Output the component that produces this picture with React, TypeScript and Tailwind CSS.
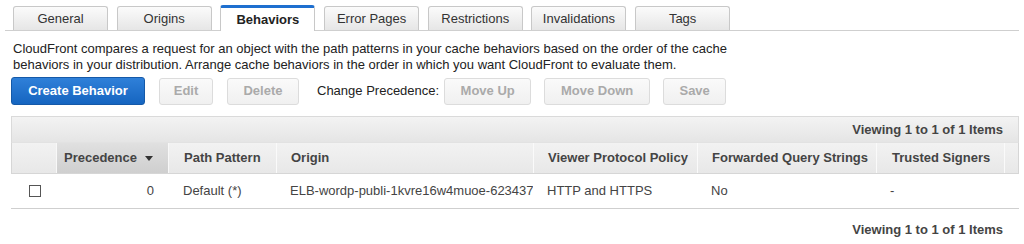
import React from "react";

const tabs = ["General", "Origins", "Behaviors", "Error Pages", "Restrictions", "Invalidations", "Tags"];

function Tab({ label, active }: { label: string; active?: boolean }) {
  if (active) {
    return (
      <div className="w-[95px] h-[26px] -mb-px flex items-center justify-center border border-[#c8c8c8] border-b-0 border-t-[3px] border-t-[#1e6fcf] rounded-t-[3px] bg-white text-[13px] font-bold text-[#222] pt-[1px]">
        {label}
      </div>
    );
  }
  return (
    <div className="w-[95px] h-[24px] flex items-center justify-center border border-[#c8c8c8] border-b-0 rounded-t-[3px] bg-gradient-to-b from-[#fbfbfb] to-[#e6e6e6] text-[13px] text-[#333]">
      {label}
    </div>
  );
}

function DisabledBtn({ label, w }: { label: string; w: string }) {
  return (
    <div className={`${w} h-[27px] flex items-center justify-center rounded-[3px] border border-[#dcdcdc] bg-gradient-to-b from-[#fafafa] to-[#f0f0f0] text-[13px] font-bold text-[#aaa]`}>
      {label}
    </div>
  );
}

export default function App() {
  return (
    <div
      className="w-[1024px] h-[244px] overflow-hidden bg-white text-[#333]"
      style={{ fontFamily: '"Liberation Sans", Arial, sans-serif' }}
    >
      {/* Tabs */}
      <div className="pt-[5px] pl-[5px] pr-[5px]">
        <div className="flex items-end gap-[8.7px] pl-[8px] h-[26px] border-b border-[#cfcfcf]">
          {tabs.map((t) => (
            <Tab key={t} label={t} active={t === "Behaviors"} />
          ))}
        </div>
      </div>

      {/* Description */}
      <div className="pl-[13px] pt-[10px] text-[13px] leading-[16px] text-[#222]">
        <div>CloudFront compares a request for an object with the path patterns in your cache behaviors based on the order of the cache</div>
        <div>behaviors in your distribution. Arrange cache behaviors in the order in which you want CloudFront to evaluate them.</div>
      </div>

      {/* Buttons */}
      <div className="flex items-center pl-[11px] pt-[4px]">
        <div className="w-[134px] h-[28px] flex items-center justify-center rounded-[3px] border border-[#1559a8] bg-gradient-to-b from-[#2f80d9] to-[#1565c0] text-[13px] font-bold text-white">
          Create Behavior
        </div>
        <div className="ml-[14px]"><DisabledBtn label="Edit" w="w-[54px]" /></div>
        <div className="ml-[14px]"><DisabledBtn label="Delete" w="w-[72px]" /></div>
        <div className="ml-[18px] text-[13px] text-[#222]">Change Precedence:</div>
        <div className="ml-[5px]"><DisabledBtn label="Move Up" w="w-[87px]" /></div>
        <div className="ml-[13px]"><DisabledBtn label="Move Down" w="w-[106px]" /></div>
        <div className="ml-[13px]"><DisabledBtn label="Save" w="w-[63px]" /></div>
      </div>

      {/* Table */}
      <div className="ml-[11px] mt-[11px] w-[1008px]">
        <div className="h-[26px] flex items-center justify-end pr-[15px] border border-[#dadada] border-b-0 bg-gradient-to-b from-[#f3f3f3] to-[#e5e5e5] text-[13px] font-bold text-[#444]">
          Viewing 1 to 1 of 1 Items
        </div>
        <div className="grid grid-cols-[45px_112px_108px_257px_164px_179px_128px_15px] h-[32px] border border-[#d6d6d6] border-t-[#e2e2e2] bg-gradient-to-b from-[#f2f2f2] to-[#e8e8e8] text-[13px] font-bold text-[#444]">
          <div className="border-r border-[#f8f8f8]" />
          <div className="flex items-center pl-[7px] bg-gradient-to-b from-[#e0e0e0] to-[#cfcfcf] border-r border-[#f8f8f8]">
            Precedence
            <svg width="8" height="5" viewBox="0 0 8 5" className="ml-[8px]">
              <path d="M0 0 H8 L4 5 Z" fill="#333" />
            </svg>
          </div>
          <div className="flex items-center pl-[15px] border-r border-[#fafafa]">Path Pattern</div>
          <div className="flex items-center pl-[14px] border-r border-[#fafafa]">Origin</div>
          <div className="flex items-center pl-[14px] border-r border-[#fafafa]">Viewer Protocol Policy</div>
          <div className="flex items-center pl-[14px] border-r border-[#fafafa]">Forwarded Query Strings</div>
          <div className="flex items-center pl-[15px] border-r border-[#fafafa]">Trusted Signers</div>
          <div />
        </div>
        <div className="grid grid-cols-[45px_112px_108px_257px_164px_179px_128px_15px] h-[35px] items-center border-b border-[#cfcfcf] text-[13px] text-[#444]">
          <div className="flex pl-[18px]">
            <div className="w-[12px] h-[12px] border border-[#555] bg-white" />
          </div>
          <div className="text-right pr-[14px]">0</div>
          <div className="pl-[15px]">Default (*)</div>
          <div className="pl-[14px] pr-[0px] overflow-hidden whitespace-nowrap">
            <span className="block w-[243px] overflow-hidden">ELB-wordp-publi-1kvre16w4muoe-6234371</span>
          </div>
          <div className="pl-[14px]">HTTP and HTTPS</div>
          <div className="pl-[14px]">No</div>
          <div className="pl-[14px]">-</div>
          <div />
        </div>
        <div className="h-[40px] flex items-center justify-end pr-[16px] pt-[1px] text-[13px] font-bold text-[#444]">
          Viewing 1 to 1 of 1 Items
        </div>
      </div>
    </div>
  );
}
